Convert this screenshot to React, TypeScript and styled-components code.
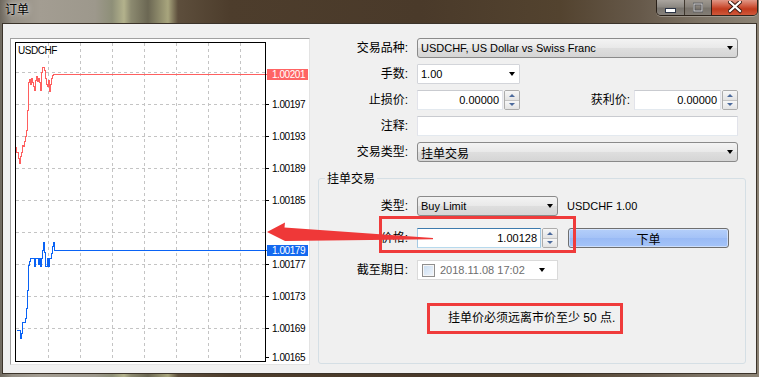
import React from 'react';
import styled, { createGlobalStyle } from 'styled-components';

const UI_FONT = `"Liberation Sans", Arial, "Noto Sans CJK SC", sans-serif`;

const GlobalStyle = createGlobalStyle`
  html, body {
    margin: 0;
    padding: 0;
  }
  body {
    width: 759px;
    height: 377px;
    overflow: hidden;
    font-family: ${UI_FONT};
    font-size: 11px;
    color: #000;
    background: linear-gradient(
      90deg,
      #6e685e 0px,
      #958f85 12px,
      #a39d92 40px,
      #9d988c 95px,
      #8e8f78 112px,
      #b3b28c 124px,
      #8c8a70 131px,
      #6b6753 148px,
      #a8a57d 168px,
      #5d4e3c 178px,
      #4d3d2c 230px,
      #4a3a2a 420px,
      #53432f 560px,
      #66594a 640px,
      #7c7264 700px,
      #8c8375 759px
    );
  }
  * {
    box-sizing: border-box;
  }
`;

const Window = styled.div`
  position: relative;
  display: flex;
  flex-direction: column;
  width: 759px;
  height: 377px;
`;

const TitleBar = styled.div`
  display: flex;
  justify-content: space-between;
  align-items: flex-start;
  flex: none;
  height: 23px;
`;

const Caption = styled.div`
  padding: 2px 0 0 5px;
  font-size: 12px;
  line-height: 16px;
  text-shadow: 0 0 6px rgba(255, 255, 255, 0.75), 0 0 2px rgba(255, 255, 255, 0.6);
`;

const CaptionButtons = styled.div`
  display: flex;
  height: 16px;
  margin-right: 1px;
  border: 1px solid rgba(30, 22, 15, 0.85);
  border-top: 0;
  border-radius: 0 0 5px 5px;
  overflow: hidden;
  box-shadow: 0 1px 0 rgba(255, 255, 255, 0.25);
`;

const CaptionButton = styled.div<{ $kind: 'min' | 'max' | 'close' }>`
  display: flex;
  align-items: center;
  justify-content: center;
  width: ${({ $kind }) => ($kind === 'close' ? 46 : 27)}px;
  opacity: ${({ $kind }) => ($kind === 'max' ? 0.75 : 1)};
  background: ${({ $kind }) =>
    $kind === 'close'
      ? 'linear-gradient(#e09786 0%, #cf5a40 40%, #c13b1e 60%, #d0583a 100%)'
      : 'linear-gradient(#aaa59f 0%, #8d8983 45%, #78746e 55%, #86817b 100%)'};

  & + & {
    border-left: 1px solid rgba(30, 22, 15, 0.85);
  }
`;

const Client = styled.div`
  flex: 1;
  display: flex;
  gap: 8px;
  margin: 0 2px 3px;
  padding: 14px 10px 8px 7px;
  background: #f0f0f0;
  border: 1px solid #3b332a;
`;

const ChartPanel = styled.div`
  flex: none;
  width: 300px;
  height: 327px;
  border: 1px solid;
  border-color: #a0a0a0 #e3e3e3 #e3e3e3 #a0a0a0;
  background: #fff;

  svg {
    display: block;
  }
`;

const AxisText = styled.text<{ $inverse?: boolean }>`
  font-family: ${UI_FONT};
  font-size: 10px;
  letter-spacing: -0.45px;
  fill: ${({ $inverse }) => ($inverse ? '#fff' : '#000')};
`;

const FormColumn = styled.div`
  display: flex;
  flex-direction: column;
  width: 428px;
`;

const TopGrid = styled.div`
  display: grid;
  grid-template-columns: 90px 1fr;
  grid-auto-rows: 20px;
  column-gap: 9px;
  row-gap: 6px;
  padding-right: 8px;
`;

const Label = styled.div`
  font-size: 12px;
  line-height: 20px;
  text-align: right;
  white-space: nowrap;
`;

const FieldPair = styled.div`
  display: flex;
  align-items: center;
`;

const PairLabel = styled(Label)`
  margin: 0 4px 0 auto;
`;

const Combo = styled.div<{ $editable?: boolean }>`
  display: flex;
  align-items: center;
  justify-content: space-between;
  height: 20px;
  padding: 0 4px 0 3px;
  border: 1px solid ${({ $editable }) => ($editable ? '#d3d5da' : '#8a8a8a')};
  border-radius: ${({ $editable }) => ($editable ? '1px' : '3px')};
  background: ${({ $editable }) =>
    $editable ? '#fff' : 'linear-gradient(#f3f3f3, #e9e9e9 48%, #dedede 52%, #d5d5d5)'};
  white-space: nowrap;
`;

const CjkText = styled.span`
  font-size: 12px;
`;

const DropArrow = styled.span`
  flex: none;
  width: 0;
  height: 0;
  margin-left: auto;
  border-left: 3.5px solid transparent;
  border-right: 3.5px solid transparent;
  border-top: 4px solid #000;
`;

const SpinBox = styled.div<{ $width: number }>`
  display: flex;
  gap: 1px;
  width: ${({ $width }) => $width}px;
  height: 20px;
`;

const NumberField = styled.div<{ $focused?: boolean }>`
  flex: 1;
  padding: 0 3px;
  text-align: right;
  line-height: 18px;
  background: #fff;
  border: 1px solid;
  border-color: ${({ $focused }) =>
    $focused ? '#3d7bad #a4c9e3 #b7d9ed #a4c9e3' : '#c9cbd0 #e2e3ea #e3e9ef #e2e3ea'};
`;

const Spinner = styled.div`
  display: flex;
  flex-direction: column;
  width: 16px;
  border: 1px solid #acacac;
  border-radius: 2px;
  overflow: hidden;
`;

const SpinStep = styled.div<{ $down?: boolean }>`
  flex: 1;
  display: flex;
  align-items: center;
  justify-content: center;
  background: linear-gradient(#f7f7f7, #e3e3e3);
  border-top: ${({ $down }) => ($down ? '1px solid #c4c4c4' : '0')};

  &::after {
    content: '';
    border-left: 3px solid transparent;
    border-right: 3px solid transparent;
    ${({ $down }) => ($down ? 'border-top' : 'border-bottom')}: 3px solid #4c6a9c;
  }
`;

const TextField = styled.div`
  height: 20px;
  background: #fff;
  border: 1px solid;
  border-color: #c9cbd0 #e2e3ea #e3e9ef #e2e3ea;
`;

const GroupBox = styled.div`
  position: relative;
  flex: 1;
  margin: 16px 0 1px;
  padding-top: 17px;
  border: 1px solid #d5dfe5;
  border-radius: 3px;
`;

const GroupLegend = styled.div`
  position: absolute;
  top: -8px;
  left: 6px;
  padding: 0 2px;
  font-size: 12px;
  line-height: 16px;
  background: #f0f0f0;
`;

const GroupGrid = styled.div`
  display: grid;
  grid-template-columns: 89px 141px 1fr;
  grid-template-rows: 20px 20px 20px;
  column-gap: 9px;
  row-gap: 12px;
  align-items: center;
`;

const Hint = styled.div`
  white-space: nowrap;
`;

const SubmitButton = styled.div`
  display: flex;
  align-items: center;
  justify-content: center;
  width: 161px;
  height: 20px;
  margin-left: 1px;
  font-size: 12px;
  border: 1px solid #6f6f6f;
  border-radius: 3px;
  background: linear-gradient(#b4cffa, #a4c2f7 50%, #99baf5 51%, #a5c4f8);
  box-shadow: inset 0 0 0 1px rgba(255, 255, 255, 0.45);
`;

const DateField = styled.div`
  display: flex;
  align-items: center;
  gap: 5px;
  height: 20px;
  padding: 0 12px 0 4px;
  color: #6d6d6d;
  background: #fff;
  border: 1px solid #dadada;
  white-space: nowrap;
`;

const CheckBox = styled.span`
  flex: none;
  width: 13px;
  height: 13px;
  border: 1px solid #8f8f8f;
  background: linear-gradient(135deg, #c9dcf0, #f1f6fc);
  box-shadow: inset 0 0 0 1px #f6f6f6;
`;

const Notice = styled.div`
  width: 196px;
  height: 31px;
  margin: 23px 0 0 108px;
  padding-left: 18px;
  font-size: 12px;
  line-height: 25px;
  white-space: nowrap;
  border: 3px solid #ef3b3b;
`;

const PriceMark = styled.div`
  position: absolute;
  top: 37px;
  left: 60px;
  width: 197px;
  height: 37px;
  border: 3px solid #ef3b3b;
  pointer-events: none;
`;

const Pointer = styled.svg`
  position: absolute;
  left: 265px;
  top: 220px;
  pointer-events: none;
`;

const gridX = [48, 80, 112, 144, 176, 208, 240];
const gridY = [72, 104, 136, 168, 200, 232, 264, 296, 328];
const axis = [
  { y: 104, text: '1.00197' },
  { y: 136, text: '1.00193' },
  { y: 168, text: '1.00189' },
  { y: 200, text: '1.00185' },
  { y: 264, text: '1.00177' },
  { y: 296, text: '1.00173' },
  { y: 328, text: '1.00169' },
  { y: 357, text: '1.00165' },
];

// price traces, page pixel coordinates (the svg viewBox is offset to match)
const askPath =
  'M16,146 V152 H18 V158 H19 V163 H20 V156 H21 V152 H22 V145 H23 V146 H24 V141 H25 V136 H26 V130 H27 V110 H28 V82 H29 V79 H30 V84 H31 V78 H32 V82 H33 V86 H34 V90 H35 V80 H36 V76 H37 V81 H38 V78 H39 V82 H40 V90 H41 V72 H42 V67 H44 V70 H45 V78 H46 V84 H47 V86 H48 V80 H49 V91 H50 V84 H51 V78 H52 V75 H53 V74 H266';
const bidPath =
  'M16,330 H20 V338 H21 V333 H22 V322 H25 V318 H26 V308 H27 V290 H28 V265 H29 V261 H30 V258 H34 V266 H35 V258 H38 V264 H39 V258 H40 V266 H41 V258 H42 V250 H43 V242 H44 V252 H45 V266 H47 V258 H48 V266 H49 V258 H51 V253 H52 V246 H53 V242 H54 V250 H266';

const Chart: React.FC = () => (
  <svg width={298} height={325} viewBox="11 39 298 325">
    <g shapeRendering="crispEdges">
      {gridX.map((x) => (
        <line key={`x${x}`} x1={x + 0.5} y1={43} x2={x + 0.5} y2={361} stroke="#c4c4c4" strokeDasharray="3 3" />
      ))}
      {gridY.map((y) => (
        <line key={`y${y}`} x1={16} y1={y + 0.5} x2={265} y2={y + 0.5} stroke="#c4c4c4" strokeDasharray="3 3" />
      ))}
    </g>
    <AxisText x={18} y={54} letterSpacing={-0.2}>
      USDCHF
    </AxisText>
    <g transform="translate(0.5 0.5)" shapeRendering="crispEdges">
      <path d={askPath} fill="none" stroke="#ff5f5f" strokeWidth={1} />
      <path d={bidPath} fill="none" stroke="#0a63f5" strokeWidth={1} />
    </g>
    <g shapeRendering="crispEdges">
      <rect x={15.5} y={42.5} width={250} height={319} fill="none" stroke="#000" />
      {axis.map((a) => (
        <line key={a.text} x1={266} y1={a.y + 0.5} x2={269} y2={a.y + 0.5} stroke="#000" />
      ))}
      <rect x={267} y={69} width={41} height={11} fill="#ff6464" />
      <rect x={267} y={245} width={41} height={11} fill="#1469f0" />
    </g>
    {axis.map((a) => (
      <AxisText key={a.text} x={272} y={a.y + 4}>
        {a.text}
      </AxisText>
    ))}
    <AxisText x={272} y={78} $inverse>
      1.00201
    </AxisText>
    <AxisText x={272} y={254} $inverse>
      1.00179
    </AxisText>
  </svg>
);

const Spin: React.FC<{ width: number; value: string; focused?: boolean }> = ({ width, value, focused }) => (
  <SpinBox $width={width}>
    <NumberField $focused={focused}>{value}</NumberField>
    <Spinner>
      <SpinStep />
      <SpinStep $down />
    </Spinner>
  </SpinBox>
);

const App: React.FC = () => (
  <Window>
    <GlobalStyle />
    <TitleBar>
      <Caption>订单</Caption>
      <CaptionButtons>
        <CaptionButton $kind="min">
          <svg width="11" height="12" viewBox="0 0 11 12">
            <rect x="0.5" y="6.5" width="10" height="4" fill="#fff" stroke="#2b3445" />
          </svg>
        </CaptionButton>
        <CaptionButton $kind="max">
          <svg width="10" height="12" viewBox="0 0 10 12">
            <rect x="1" y="2" width="8" height="7" fill="none" stroke="#2b3445" strokeWidth="2.5" />
            <rect x="1" y="2" width="8" height="7" fill="none" stroke="#e6e6e6" strokeWidth="1.2" />
          </svg>
        </CaptionButton>
        <CaptionButton $kind="close">
          <svg width="14" height="14" viewBox="0 0 14 14">
            <path d="M2 1 L12 10 M12 1 L2 10" stroke="#3a1810" strokeWidth="4" strokeLinecap="square" />
            <path d="M2 1 L12 10 M12 1 L2 10" stroke="#fff" strokeWidth="2.2" strokeLinecap="square" />
          </svg>
        </CaptionButton>
      </CaptionButtons>
    </TitleBar>

    <Client>
      <ChartPanel>
        <Chart />
      </ChartPanel>

      <FormColumn>
        <TopGrid>
          <Label>交易品种:</Label>
          <Combo>
            <span>USDCHF, US Dollar vs Swiss Franc</span>
            <DropArrow />
          </Combo>

          <Label>手数:</Label>
          <FieldPair>
            <Combo $editable style={{ width: 103 }}>
              <span>1.00</span>
              <DropArrow />
            </Combo>
          </FieldPair>

          <Label>止损价:</Label>
          <FieldPair>
            <Spin width={103} value="0.00000" />
            <PairLabel>获利价:</PairLabel>
            <Spin width={104} value="0.00000" />
          </FieldPair>

          <Label>注释:</Label>
          <TextField />

          <Label>交易类型:</Label>
          <Combo>
            <CjkText>挂单交易</CjkText>
            <DropArrow />
          </Combo>
        </TopGrid>

        <GroupBox>
          <GroupLegend>挂单交易</GroupLegend>
          <GroupGrid>
            <Label>类型:</Label>
            <Combo>
              <span>Buy Limit</span>
              <DropArrow />
            </Combo>
            <Hint>USDCHF 1.00</Hint>

            <Label>价格:</Label>
            <Spin width={141} value="1.00128" focused />
            <SubmitButton>下单</SubmitButton>

            <Label>截至期日:</Label>
            <DateField>
              <CheckBox />
              <span>2018.11.08 17:02</span>
              <DropArrow />
            </DateField>
          </GroupGrid>
          <Notice>挂单价必须远离市价至少 50 点.</Notice>
          <PriceMark />
        </GroupBox>
      </FormColumn>
    </Client>

    <Pointer width={170} height={24} viewBox="0 0 170 24">
      <polygon points="2,12 20,2.5 19.5,7.5 168,18 168,19.3 20,21" fill="#ef3838" />
    </Pointer>
  </Window>
);

export default App;
